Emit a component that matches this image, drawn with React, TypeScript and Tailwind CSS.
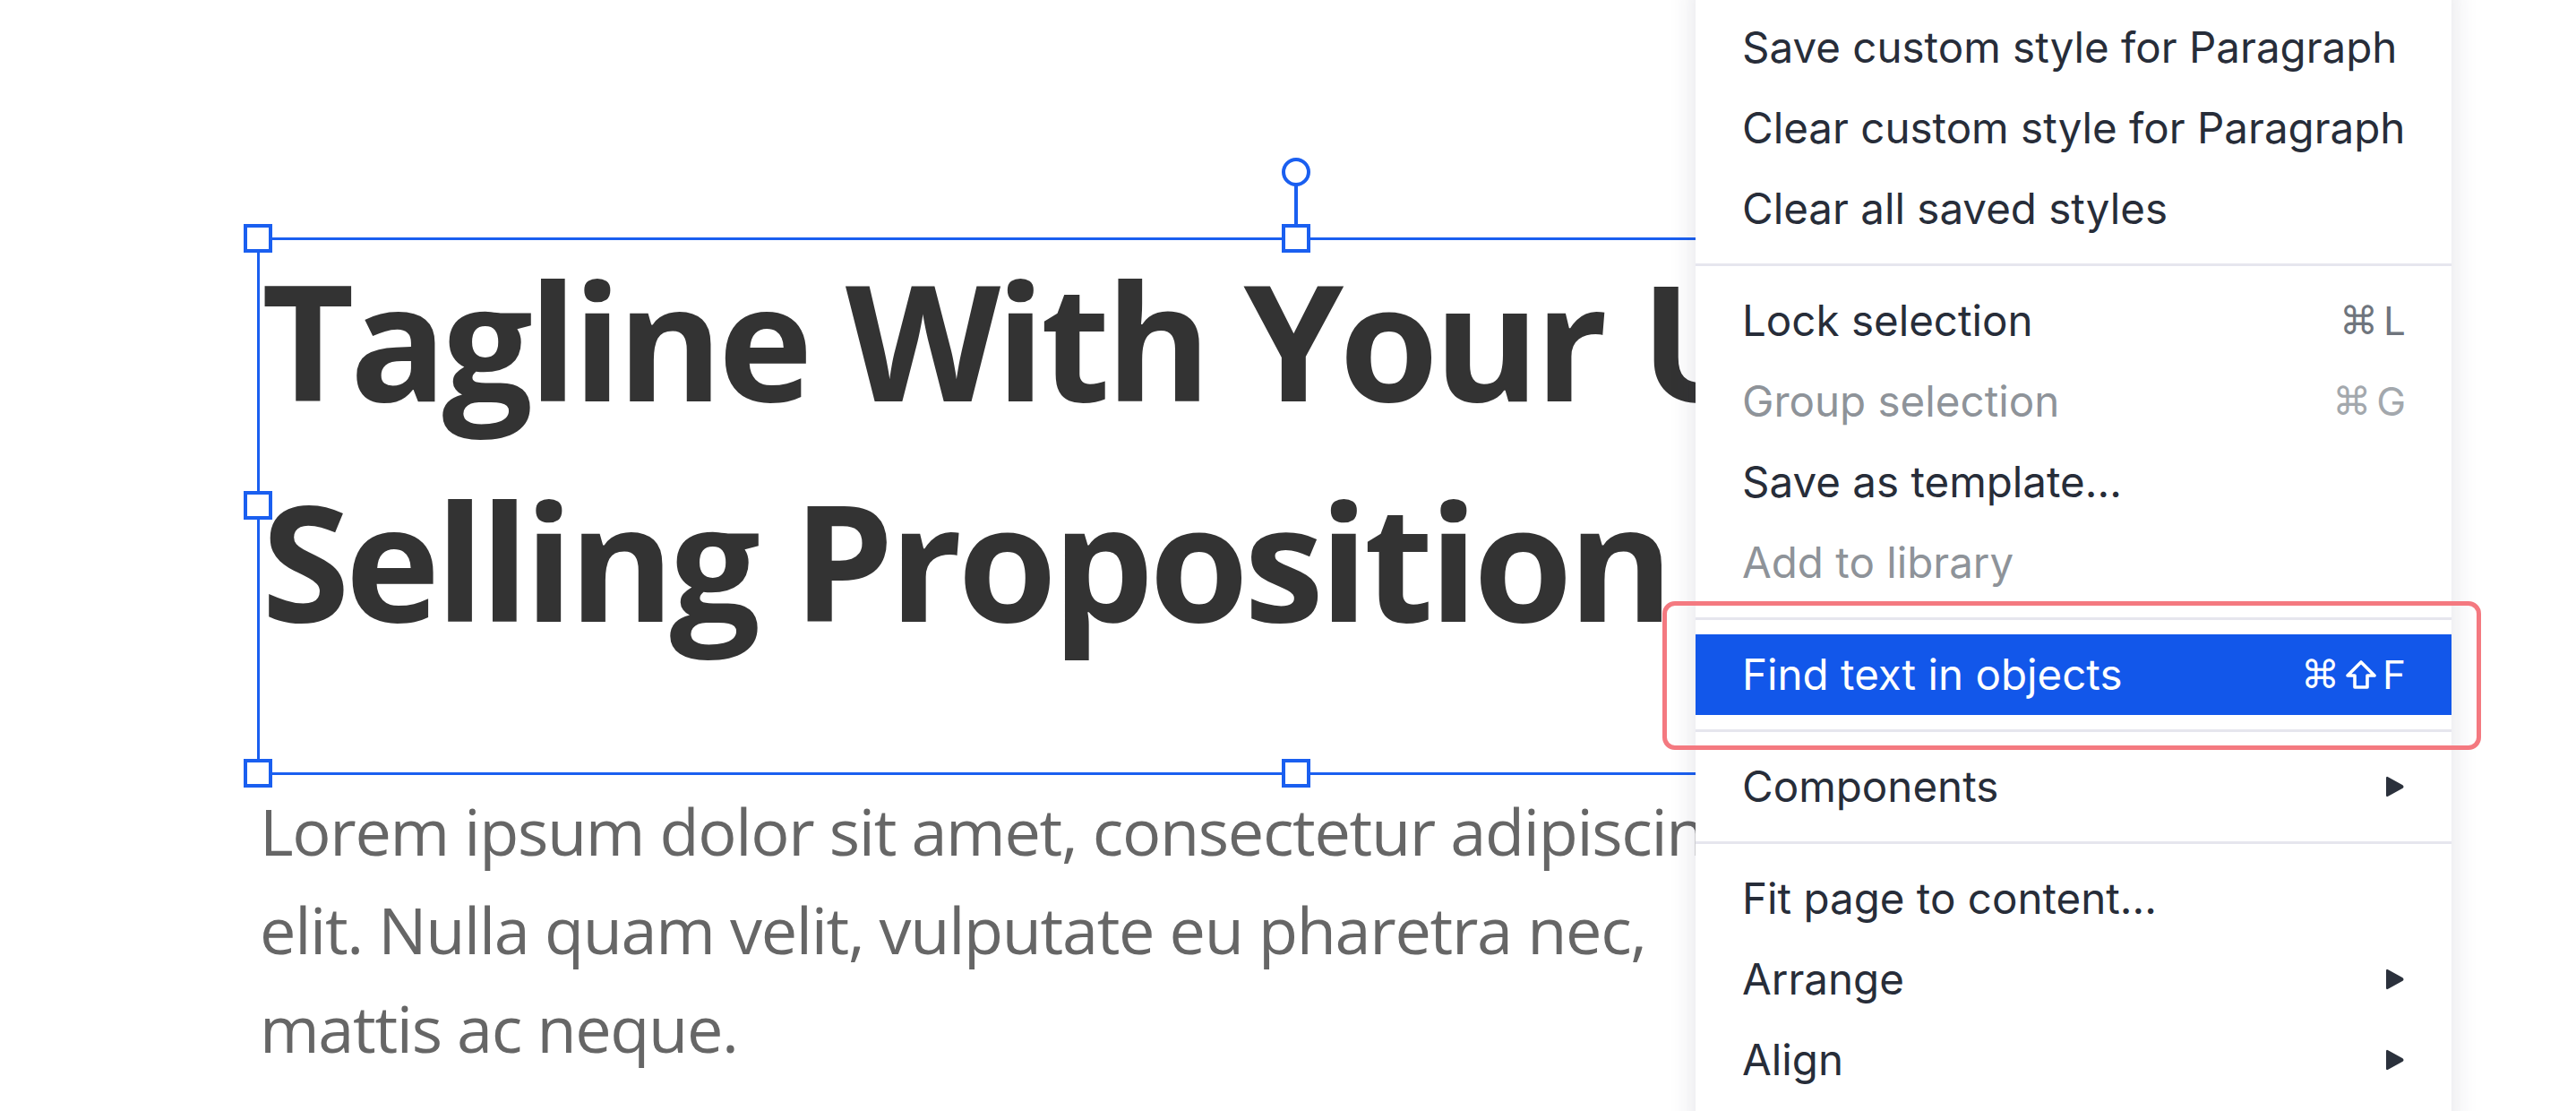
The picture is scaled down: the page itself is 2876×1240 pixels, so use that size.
import React from "react";

function Handle({ className }: { className: string }) {
  return <div className={`absolute h-[32px] w-[32px] border-[4px] border-[#1a5ff0] bg-white ${className}`} />;
}

function Tri() {
  return (
    <svg width="26" height="26" viewBox="0 0 26 26" className="block">
      <path d="M4 3.5 Q4 1 6.2 2.2 L22.5 11.2 Q24.5 13 22.5 14.8 L6.2 23.8 Q4 25 4 22.5 Z" fill="#2b313c" />
    </svg>
  );
}

function ShiftIcon() {
  return (
    <svg width="36" height="34" viewBox="0 0 36 34" className="block">
      <path
        d="M18 3 L33 18 L25 18 L25 31 L11 31 L11 18 L3 18 Z"
        fill="none"
        stroke="currentColor"
        strokeWidth="3.6"
        strokeLinejoin="round"
      />
    </svg>
  );
}

type Row = { label: string; sc?: string; shift?: boolean; disabled?: boolean; sub?: boolean; active?: boolean };
type Item = Row | "sep";

const items: Item[] = [
  { label: "Save custom style for Paragraph" },
  { label: "Clear custom style for Paragraph" },
  { label: "Clear all saved styles" },
  "sep",
  { label: "Lock selection", sc: "L" },
  { label: "Group selection", sc: "G", disabled: true },
  { label: "Save as template..." },
  { label: "Add to library", disabled: true },
  "sep",
  { label: "Find text in objects", sc: "F", shift: true, active: true },
  "sep",
  { label: "Components", sub: true },
  "sep",
  { label: "Fit page to content..." },
  { label: "Arrange", sub: true },
  { label: "Align", sub: true },
];

function MenuRow({ it }: { it: Row }) {
  const tone = it.active ? "bg-[#1257ea] text-white" : it.disabled ? "text-[#8e9399]" : "text-[#272d39]";
  const scTone = it.active ? "text-white" : it.disabled ? "text-[#a3a8ad]" : "text-[#6f757d]";
  return (
    <div className={`flex h-[90px] items-center justify-between pl-[52px] pr-[51px] text-[47.5px] ${tone}`}>
      <span>{it.label}</span>
      {it.sc && (
        <span className={`flex items-center gap-[6px] text-[44px] ${scTone}`}>
          <span className="font-['DejaVu_Sans',sans-serif] text-[43px]">⌘</span>
          {it.shift && <ShiftIcon />}
          <span className="font-['Inter',sans-serif]">{it.sc}</span>
        </span>
      )}
      {it.sub && <Tri />}
    </div>
  );
}

export default function App() {
  return (
    <div className="relative h-[1240px] w-[2876px] overflow-hidden bg-white">
      {/* Selected text block on the canvas */}
      <div className="absolute left-[288px] top-[266px] h-[597px] w-[2318px]">
        <div className="absolute inset-[-1.5px] border-[3px] border-[#1a5ff0]" />
        <div className="absolute left-[4px] top-[-10.5px] whitespace-nowrap font-['Open_Sans',sans-serif] text-[179px] font-bold leading-[246px] tracking-[-5px] text-[#333333]">
          Tagline With Your Unique
          <br />
          Selling Proposition
        </div>
        <Handle className="left-[-16px] top-[-16px]" />
        <Handle className="left-[1143px] top-[-16px]" />
        <Handle className="left-[-16px] top-[282px]" />
        <Handle className="left-[-16px] top-[581px]" />
        <Handle className="left-[1143px] top-[581px]" />
        <div className="absolute left-[1157px] top-[-59px] h-[43px] w-[4px] bg-[#1a5ff0]" />
        <div className="absolute left-[1143px] top-[-90px] h-[32px] w-[32px] rounded-full border-[4px] border-[#1a5ff0] bg-white" />
      </div>
      <div className="absolute left-[290px] top-[872px] whitespace-nowrap font-['Open_Sans',sans-serif] text-[72px] leading-[110px] tracking-[-1.3px] text-[#666666]">
        Lorem ipsum dolor sit amet, consectetur adipiscing
        <br />
        elit. Nulla quam velit, vulputate eu pharetra nec,
        <br />
        mattis ac neque.
      </div>

      {/* Context menu */}
      <div className="absolute left-[1893px] top-[-20px] flex w-[844px] flex-col bg-white pb-[40px] pt-[28px] font-['Inter',sans-serif] shadow-[0_0_28px_rgba(40,40,80,0.14)]">
        {items.map((it, i) =>
          it === "sep" ? (
            <div key={i} className="py-[16px]">
              <div className="h-[3px] bg-[#e6e6ee]" />
            </div>
          ) : (
            <MenuRow key={i} it={it} />
          )
        )}
      </div>
      {/* Highlight outline around the active item */}
      <div className="absolute left-[1856px] top-[671px] h-[166px] w-[914px] rounded-[14px] border-[5px] border-[#f47980]" />
    </div>
  );
}
